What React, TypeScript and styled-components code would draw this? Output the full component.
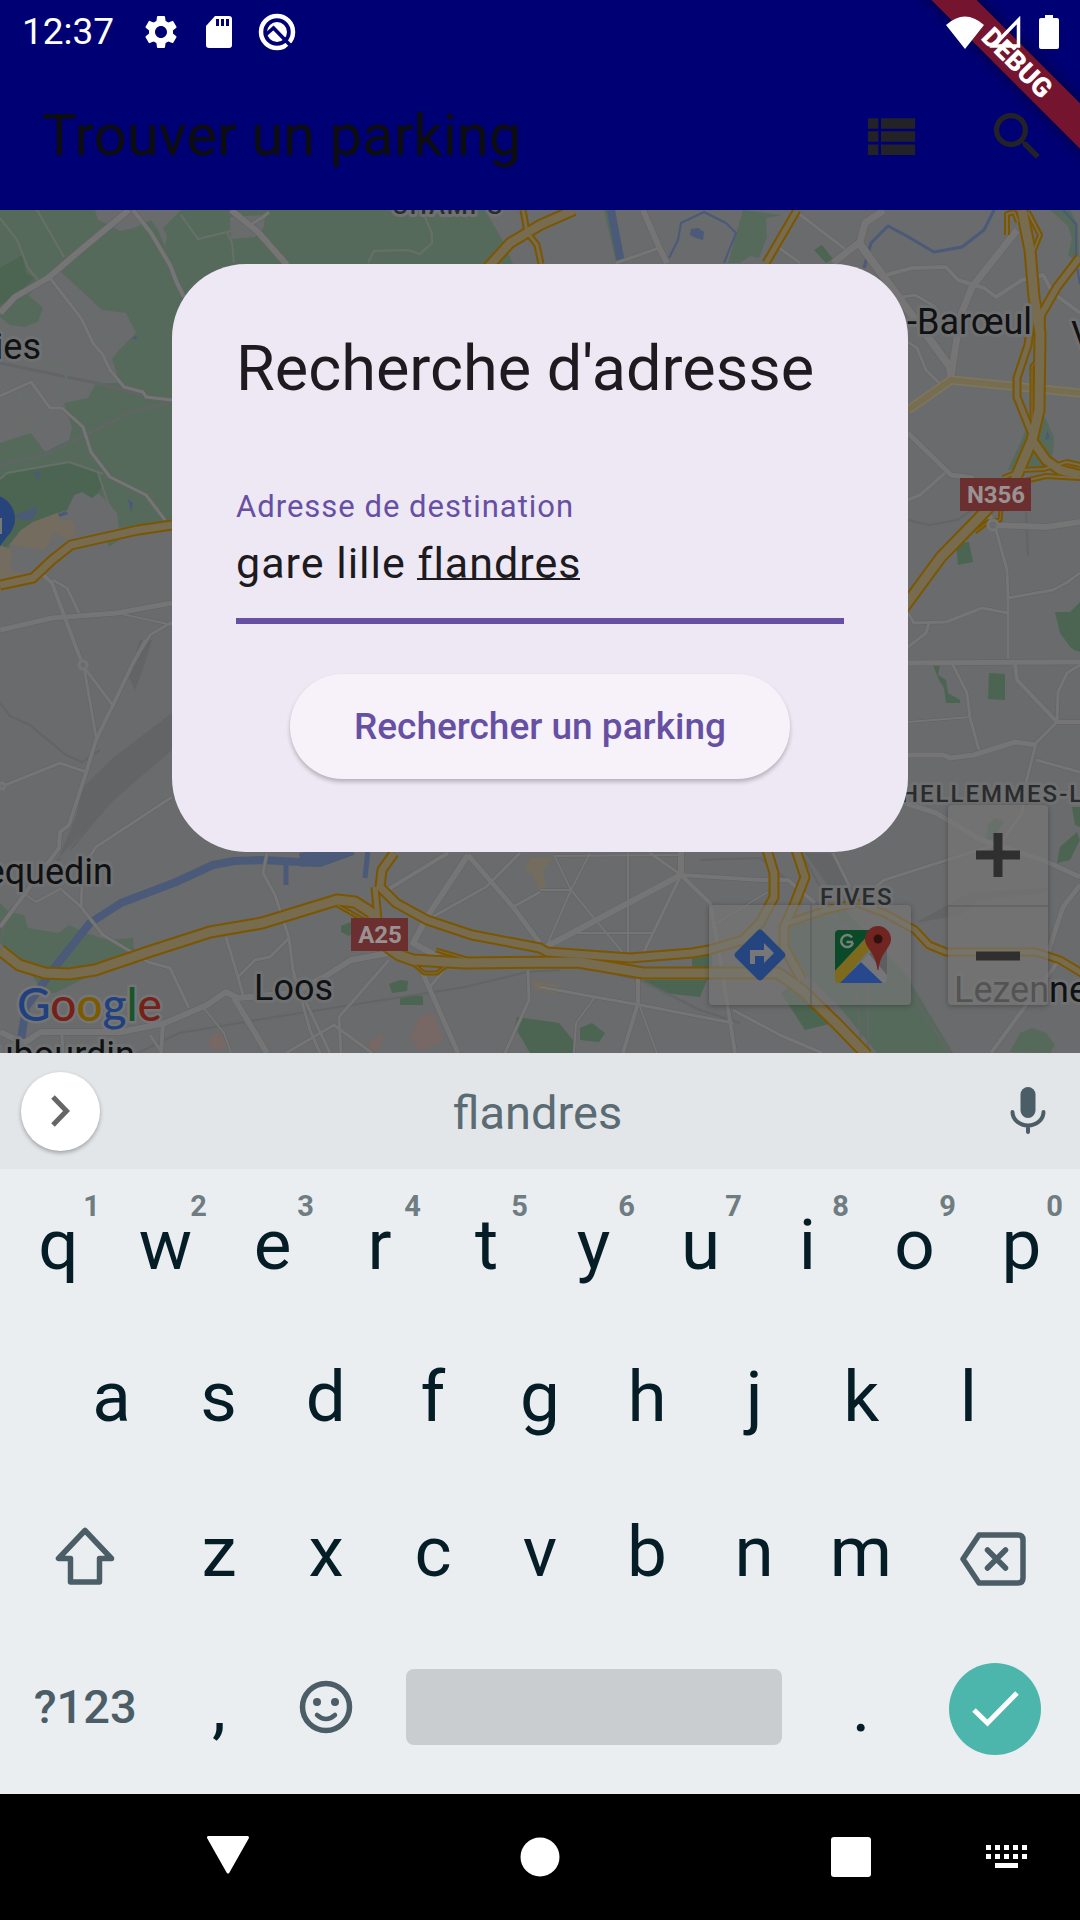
import React, { useLayoutEffect, useState } from 'react';
import styled, { createGlobalStyle, css } from 'styled-components';
import { MdSettings } from 'react-icons/md';

const GlobalStyle = createGlobalStyle`
  * { box-sizing: border-box; }
  html, body { margin: 0; background: #000; }
  body, button, input { font-family: Roboto, "Noto Sans", sans-serif; }
  button { border: 0; padding: 0; margin: 0; background: none; cursor: pointer; }
  svg { display: block; }
`;

const Screen = styled.div`
  position: relative;
  display: flex;
  flex-direction: column;
  min-height: 100vh;
  overflow: hidden;
`;

/* ---------- Status bar and app bar ---------- */

const TopArea = styled.header`
  background: #000075;
`;

const StatusBar = styled.div`
  position: relative;
  z-index: 2;
  display: flex;
  align-items: center;
  height: 63px;
  padding: 0 10px 0 22px;
  color: #fff;
`;

const Clock = styled.time`
  font-size: 37px;
  line-height: 64px;
  margin-right: 26px;
`;

const StatusIcons = styled.div<{ $end?: boolean }>`
  display: flex;
  gap: ${(p) => (p.$end ? 0 : 16)}px;
  ${(p) => p.$end && css`margin-left: auto;`}
`;

const StatusIcon = styled.span`
  display: grid;
  place-items: center;
  width: 42px;
  height: 42px;
`;

const AppBar = styled.div`
  display: flex;
  align-items: center;
  height: 147px;
  padding-left: 42px;
  color: #0d0d0f;
`;

const AppTitle = styled.h1`
  flex: 1;
  margin: 0;
  padding-bottom: 4px;
  font-size: 58px;
  font-weight: 400;
  line-height: 74px;
`;

const AppAction = styled.button`
  display: grid;
  place-items: center;
  width: 126px;
  height: 126px;
  color: #232227;
`;

const BannerCorner = styled.div`
  position: absolute;
  top: 0;
  right: 0;
  z-index: 1;
  width: 180px;
  height: 180px;
  overflow: hidden;
  pointer-events: none;
`;

const Banner = styled.div`
  position: absolute;
  top: 47px;
  left: -13px;
  width: 260px;
  height: 32px;
  background: #75142e;
  box-shadow: 0 0 16px rgba(0, 0, 0, 0.5);
  color: #fff;
  font-size: 27px;
  font-weight: 900;
  line-height: 32px;
  text-align: center;
  transform: rotate(45deg);
`;

/* ---------- Map ---------- */

const MapArea = styled.main`
  position: relative;
  flex: 1;
  display: flex;
  justify-content: center;
  align-items: flex-start;
  padding: 54px 32px 201px;
  background: #6a6b6d;
`;

const MapCanvas = styled.svg`
  position: absolute;
  inset: 0;
  width: 100%;
  height: 100%;
`;

const MapControls = styled.div`
  position: absolute;
  right: 32px;
  bottom: 48px;
  display: flex;
  align-items: flex-end;
  gap: 37px;
`;

const ControlGroup = styled.div<{ $column?: boolean }>`
  display: flex;
  flex-direction: ${(p) => (p.$column ? 'column' : 'row')};
  background: rgba(119, 119, 119, 0.66);
  border-radius: 4px;
  box-shadow: 0 1px 5px rgba(40, 40, 40, 0.45);

  & > button {
    width: ${(p) => (p.$column ? 100 : 101)}px;
    height: 100px;
  }

  & > button + button {
    ${(p) => (p.$column ? 'border-top' : 'border-left')}: 2px solid rgba(95, 95, 95, 0.7);
  }
`;

const ControlButton = styled.button`
  display: grid;
  place-items: center;
`;

/* ---------- Dialog ---------- */

const Dialog = styled.form`
  position: relative;
  z-index: 1;
  display: flex;
  flex-direction: column;
  width: 100%;
  max-width: 736px;
  padding: 63px 64px 73px;
  border-radius: 74px;
  background: #eee8f4;
`;

const DialogTitle = styled.h2`
  margin: 0 0 76px;
  color: #1d1b20;
  font-size: 63px;
  font-weight: 400;
  line-height: 84px;
`;

const FieldLabel = styled.label`
  color: #6750a4;
  font-size: 31px;
  line-height: 40px;
  letter-spacing: 1px;
`;

const Field = styled.div`
  position: relative;
`;

const FieldInput = styled.input`
  display: block;
  width: 100%;
  height: 97px;
  padding: 0 0 20px;
  border: 0;
  border-bottom: 6px solid #6750a4;
  border-radius: 0;
  outline: none;
  background: transparent;
  color: #1d1b20;
  font-size: 43px;
  letter-spacing: 1px;
`;

const ComposingMark = styled.span`
  position: absolute;
  top: 51px;
  height: 2px;
  background: #1d1b20;
`;

const SubmitButton = styled.button`
  align-self: center;
  margin-top: 50px;
  padding: 0 64px;
  height: 105px;
  border-radius: 53px;
  background: #f7f2fa;
  box-shadow: 0 3px 4px rgba(0, 0, 0, 0.24);
  color: #6750a4;
  font-size: 37px;
  font-weight: 500;
`;

/* ---------- Keyboard ---------- */

const SuggestionBar = styled.div`
  display: grid;
  grid-template-columns: 1fr auto 1fr;
  align-items: center;
  height: 116px;
  padding: 0 26px 0 21px;
  background: #e2e6e9;
`;

const ExpandButton = styled.button`
  display: grid;
  place-items: center;
  width: 79px;
  height: 79px;
  border-radius: 50%;
  background: #fff;
  box-shadow: 0 2px 4px rgba(0, 0, 0, 0.3);
`;

const Suggestion = styled.button`
  padding-top: 4px;
  color: #5a6b73;
  font-size: 47px;
  line-height: 60px;
`;

const MicButton = styled.button`
  justify-self: end;
  padding-right: 5px;
`;

const Keyboard = styled.section`
  padding-bottom: 10px;
  background: #ebeef1;
`;

const KeyRow = styled.div<{ $inset?: boolean }>`
  display: flex;
  height: 155px;
  padding: 0 ${(p) => (p.$inset ? 58 : 5)}px;

  &:first-child {
    height: 150px;
  }
`;

const Key = styled.button<{ $units?: number; $small?: boolean }>`
  position: relative;
  display: grid;
  place-items: center;
  flex: ${(p) => p.$units ?? 1} 1 0;
  color: ${(p) => (p.$small ? '#4b5d66' : '#051d27')};
  font-size: ${(p) => (p.$small ? 47 : 71)}px;
  font-weight: ${(p) => (p.$small ? 500 : 400)};
`;

const KeyHint = styled.span`
  position: absolute;
  top: 20px;
  right: 12px;
  color: #6f7c82;
  font-size: 29px;
  font-weight: 700;
  line-height: 34px;
`;

const SpaceBar = styled.span`
  width: calc(100% - 52px);
  height: 76px;
  border-radius: 8px;
  background: #c9cdd0;
`;

const EnterDisc = styled.span`
  display: grid;
  place-items: center;
  width: 92px;
  height: 92px;
  margin-top: 4px;
  border-radius: 50%;
  background: #4db6ac;
`;

/* ---------- System navigation ---------- */

const NavBar = styled.nav`
  display: grid;
  grid-template-columns: 178fr 100px 212fr 100px 211fr 100px 56fr 100px 23fr;
  height: 126px;
  background: #000;

  & > :nth-child(1) { grid-column: 2; }
  & > :nth-child(2) { grid-column: 4; }
  & > :nth-child(3) { grid-column: 6; }
  & > :nth-child(4) { grid-column: 8; }
`;

const NavButton = styled.button`
  display: grid;
  place-items: center;
`;

/* ---------- Map data ---------- */

type Line = [number, string];

const GREEN = '#566a5c';
const DARK_GREEN = '#4c6552';
const URBAN = '#6a6b6d';
const WATER = '#4a5a78';
const TAN = '#746c5e';
const PINK = '#776866';
const RAIL = '#636466';

const areas: [string, string][] = [
  [GREEN, '0,210 489,210 489,217 504,243 513,264 400,300 200,420 172,523 119,528 117,513 108,502 98,493 92,498 82,492 74,495 67,510 57,513 33,522 21,533 7,550 0,553'],
  [URBAN, '95,210 98,220 110,225 120,231 134,228 151,220 158,230 165,246 167,236 163,228 169,222 181,210'],
  [URBAN, '230,217 231,239 255,237 264,227 265,215'],
  [URBAN, '60,271 102,310 126,313 136,333 119,350 112,359 120,383 96,383 88,398 64,403 72,427 69,440 45,452 31,433 0,443 0,317 10,325 24,327 38,322 43,308 28,295 48,278'],
  [DARK_GREEN, '0,268 22,255 26,273 34,278 15,297 0,305'],
  [DARK_GREEN, '0,480 7,473 69,462 98,473 103,483 98,493 92,498 82,492 74,495 67,510 57,513 33,522 21,533 0,553'],
  [TAN, '9,545 21,530 33,522 57,513 61,520 72,520 76,533 69,540 55,533 45,550'],
  [TAN, '0,545 12,550 10,570 26,574 20,580 0,580'],
  [WATER, '34,472 41,472 38,480'],
  [WATER, '14,515 38,507 32,520 20,519'],
  [WATER, '128,499 133,503 131,512'],
  [WATER, '58,514 66,511 68,514 60,517'],
  [WATER, '132,338 137,335 136,340'],
  [GREEN, '106,540 122,538 109,547'],
  [GREEN, '743,210 781,215 766,218 767,237 759,258 750,256 740,263 728,263'],
  [GREEN, '604,210 612,210 624,262 616,262'],
  [DARK_GREEN, '814,250 822,245 833,259 826,263'],
  [WATER, '691,229 698,228 704,232 703,240 696,238 690,235'],
  [GREEN, '1050,210 1070,210 1078,225 1079,262 1068,255 1072,238 1068,226'],
  [GREEN, '1045,417 1054,437 1053,453 1046,467 1008,470 1026,430'],
  [WATER, '1047,430 1050,438 1045,440'],
  [DARK_GREEN, '956,543 969,542 973,562 958,565'],
  [DARK_GREEN, '1055,612 1070,612 1080,602 1080,650 1071,648 1060,633'],
  [DARK_GREEN, '989,673 1005,674 1005,700 988,699'],
  [DARK_GREEN, '933,665 940,665 938,675 946,680 948,693 960,700 960,703 946,703 944,688 939,680'],
  [DARK_GREEN, '986,838 988,824 996,818 1004,822 991,843'],
  [DARK_GREEN, '1072,807 1080,807 1080,827 1075,825'],
  [DARK_GREEN, '1057,863 1060,847 1077,832 1080,840 1070,860'],
  [DARK_GREEN, '1066,640 1080,640 1080,652 1074,650'],
  [RAIL, '172,713 172,750 114,800 69,847 59,857 76,817 83,787 114,757'],
  [RAIL, '152,640 140,640 129,677 135,690 142,672'],
  [GREEN, '0,903 9,912 24,915 28,928 59,933 69,925 86,933 107,940 133,938 134,948 138,963 96,973 55,993 43,993 34,978 0,943'],
  [DARK_GREEN, '389,984 400,980 408,981 407,991 392,993'],
  [DARK_GREEN, '400,998 410,995 423,996 423,1005 400,1005'],
  [DARK_GREEN, '341,926 351,922 356,930 349,936 341,932'],
  [DARK_GREEN, '517,1017 559,1023 573,1040 574,1053 530,1053 515,1027'],
  [DARK_GREEN, '580,1028 592,1023 605,1033 599,1042 580,1040'],
  [DARK_GREEN, '643,980 707,980 700,997 664,993'],
  [DARK_GREEN, '692,958 712,952 712,969 692,970'],
  [GREEN, '790,925 840,905 905,973 953,1053 877,1053 838,1005 790,960'],
  [DARK_GREEN, '781,993 795,983 833,1023 805,1030'],
  [GREEN, '1010,1052 1020,1033 1032,1028 1046,1033 1055,1045 1050,1053'],
  [PINK, '207,1042 217,1032 230,1042 217,1053'],
  [PINK, '410,1037 420,1016 433,1013 444,1040 420,1052'],
  [PINK, '368,1043 384,1033 379,1050 372,1053'],
  [TAN, '525,870 530,858 554,857 543,870 546,889 538,889 533,875'],
  [TAN, '532,980 558,985 558,994 535,990'],
  [RAIL, '805,853 830,853 850,885 862,905 840,903'],
  [RAIL, '915,923 970,893 1050,887 1045,893 980,900 960,915'],
];

const water: Line[] = [
  [8, '611,210 621,263'],
  [2, '669,258 678,240 681,223 704,212 726,223 736,233 724,263'],
  [3, '864,268 871,243 888,226 905,235 934,252 962,247 984,230 994,210'],
  [2, '1063,210 1076,224 1076,262 1080,284'],
  [8, '353,851 320,863 262,860 234,861 213,865 176,882 121,903 90,923 55,967 26,1007 21,1040'],
  [14, '300,860 322,857 350,848'],
  [5, '286,863 286,885'],
  [5, '368,850 365,878'],
];

const rails: Line[] = [
  [3, '0,363 96,383 172,402'],
  [2, '0,465 45,455 90,433 131,412 172,402'],
  [2, '0,703 10,716 30,725 66,755 82,762 100,750'],
  [2, '908,520 929,525 957,520 977,507'],
  [2, '1026,512 1028,556'],
  [2, '138,1053 179,1033 275,1017 465,987 527,972 560,970'],
  [2, '555,960 640,980 700,1010 740,1023'],
  [2, '172,735 120,790 70,850'],
  [2, '0,940 10,910 60,858'],
  [2, '905,985 950,1053'],
  [2, '868,985 868,1053'],
  [2, '856,990 862,1053'],
  [2, '700,860 760,858 800,890 850,930'],
  [2, '800,850 830,905 850,940'],
];

const roads: Line[] = [
  [7, '0,313 15,297 48,278 83,248 129,210'],
  [5, '133,210 151,233 170,265 177,283 184,297'],
  [7, '231,210 258,232 287,265'],
  [4, '269,212 263,217 250,225'],
  [4, '50,278 81,318 93,343 103,355 110,370 124,387 143,392 146,397 172,400'],
  [4, '0,396 31,382 50,408 62,408 83,427 91,452 110,477 146,495 165,520'],
  [6, '0,630 52,618 117,613 172,603'],
  [5, '41,573 52,583 62,610 77,650 83,665'],
  [3, '117,613 172,625'],
  [4, '53,580 67,588 79,613'],
  [4, '141,650 150,635 172,622'],
  [7, '643,210 659,247 667,263'],
  [4, '659,248 616,263'],
  [4, '798,213 845,249'],
  [4, '778,247 800,263'],
  [8, '884,210 865,223 860,242 833,263'],
  [9, '859,243 950,367 951,377'],
  [5, '886,275 912,268 946,267 958,280 984,288 996,297 1022,280 1043,275 1053,293 1080,313'],
  [8, '1017,230 972,287 960,317 951,377'],
  [6, '908,433 951,475 974,478'],
  [4, '945,473 920,495 908,500'],
  [4, '908,342 917,348 926,370 939,383'],
  [4, '902,297 915,295 936,307'],
  [7, '988,513 993,525 1046,527 1080,522'],
  [4, '996,530 1007,570 1008,598 1008,658'],
  [4, '1008,598 1053,590 1066,583 1080,573'],
  [4, '1008,613 982,608 946,622 914,623 908,613'],
  [4, '929,623 926,633 908,647'],
  [4, '84,667 96,737'],
  [4, '84,667 114,707'],
  [5, '146,640 133,663 114,703 96,740 86,773 69,825 60,832 59,848 0,927'],
  [4, '0,787 60,763 86,772'],
  [4, '172,797 96,847 83,867 81,907'],
  [3, '26,895 36,902 62,888'],
  [4, '62,890 81,907 103,935 148,962 170,968 189,1008'],
  [4, '267,853 263,873 275,895 289,938 293,970 310,1030 320,1053'],
  [4, '226,937 238,977 243,995'],
  [4, '238,977 255,960 270,957 289,938'],
  [7, '389,953 351,960 324,977 293,993 238,998 226,992 207,1005 165,1023 121,1032 41,1032 24,1043 0,1032'],
  [7, '234,998 267,1053'],
  [3, '203,1007 224,1033 231,1053'],
  [5, '163,1023 161,1053'],
  [4, '62,1035 63,1053'],
  [4, '150,1035 160,1050'],
  [5, '448,853 382,893'],
  [7, '468,855 427,917 413,943 444,960'],
  [6, '468,855 513,907 540,943'],
  [4, '520,853 503,870 486,887 427,920'],
  [4, '513,907 540,892'],
  [6, '420,967 458,1053'],
  [4, '444,970 430,987'],
  [4, '389,960 339,1017 341,1053'],
  [4, '286,1053 334,1025 372,1053'],
  [4, '293,975 330,1053'],
  [4, '528,970 529,1000 505,1053'],
  [6, '908,663 1080,662'],
  [4, '952,663 967,693 970,718 979,750'],
  [3, '908,722 970,717'],
  [5, '1015,663 1017,680 1057,722 1080,722'],
  [4, '1080,665 1067,673 1058,692 1057,722 1036,743 1026,783 1022,813 1001,843 884,880 864,897'],
  [6, '908,755 943,755 950,758 974,755 1015,742 1036,745'],
  [4, '1036,760 1080,772'],
  [6, '905,803 936,813 981,840 1043,860 1080,877'],
  [6, '1080,885 1063,907 1048,953'],
  [5, '1057,963 991,1053'],
  [4, '833,853 850,887'],
  [7, '540,950 681,875 681,850'],
  [5, '681,875 760,880 788,880 815,903'],
  [5, '681,875 710,903 722,970 735,1053'],
  [3, '712,926 768,892'],
  [3, '628,853 628,960'],
  [3, '574,933 654,933'],
  [3, '554,856 681,855'],
  [3, '555,857 571,890 623,953'],
  [3, '590,853 571,890 545,950'],
  [3, '540,890 571,890'],
  [4, '650,853 681,875 640,960'],
  [5, '638,973 638,1003 623,1053'],
  [4, '540,987 595,997 640,1005 733,1023'],
  [3, '640,1007 657,1053'],
  [3, '595,997 576,1023 574,1053'],
  [4, '733,1010 780,1035 822,1053'],
];

const lanes = [
  '181,215 198,239 227,232 232,243 234,263',
  '227,232 250,225',
  '368,263 374,251 408,250 420,254 432,243 432,234 425,217',
  '0,218 17,240 28,268 38,280',
  '37,210 64,257',
  '0,479 7,473 69,462 103,474',
  '98,473 108,503',
  '71,300 86,306 110,337 98,343 81,322 66,332 54,327 55,318 70,310 78,318',
  '0,373 10,375 12,385 0,393',
  '18,388 30,430 37,430 52,410',
  '0,418 31,430',
  '55,360 66,376 62,400',
  '8,330 30,355 60,365 84,360',
];

const arterials: Line[] = [[9, '908,410 951,380 1080,393']];

const motorways: Line[] = [
  [11, '0,585 33,578 52,560 71,545 138,530 172,525'],
  [12, '480,276 510,243 540,225 574,210'],
  [7, '523,210 527,232 537,245 541,264'],
  [9, '797,210 766,263'],
  [6, '1007,235 1007,214 1014,212 1018,222'],
  [6, '1028,212 1040,235 1034,250'],
  [9, '1034,303 1028,345 1017,378 1017,397 1031,432'],
  [5, '1036,362 1032,366 1032,420'],
  [10, '1080,257 1057,287 1041,315 1040,350'],
  [6, '1003,478 1022,470 1044,469 1067,462 1080,465'],
  [6, '1012,484 1046,476 1080,478'],
  [12, '1032,440 1046,460 1060,470 1080,475'],
  [13, '1022,210 1030,250 1034,297 1040,333 1039,410 1032,440 1015,480 977,520 941,557 902,610'],
  [5, '975,532 988,522 1000,520 1001,510'],
  [5, '406,957 424,973 437,973 451,962'],
  [5, '436,950 460,957 480,963'],
  [5, '337,905 360,918 376,924'],
  [9, '375,887 378,920'],
  [11, '394,853 382,870 380,887 396,903 427,920 472,935 540,948 547,952 630,958 692,953 709,950 743,940 760,923 774,897 774,873 767,850'],
  [13, '0,950 19,965 45,973 69,974 95,970 148,952 210,932 262,923 337,900 355,902 372,913 382,943 399,955 413,960 465,963 578,962 643,973 778,973 802,990 836,1023 867,1055'],
  [11, '796,850 805,877 795,903 784,927 784,947 802,980'],
  [9, '788,923 826,910 857,903 884,913 915,930 929,945 946,952 1036,952 1060,960 1085,975'],
];

const Strokes = ({ lines, color, trim = 0 }: { lines: Line[]; color: string; trim?: number }) => (
  <g fill="none" stroke={color} strokeLinejoin="round" strokeLinecap="butt">
    {lines.map(([width, points], i) => (
      <polyline key={i} points={points} strokeWidth={width - trim} />
    ))}
  </g>
);

const TownLabel = styled.text`
  fill: #101112;
  font-family: Roboto, sans-serif;
  font-size: 36px;
  stroke: #707172;
  stroke-width: 6px;
  stroke-linejoin: round;
  paint-order: stroke;
`;

const DistrictLabel = styled(TownLabel)`
  fill: #292b2d;
  font-size: 24px;
  font-weight: 500;
  letter-spacing: 2px;
`;

const ShieldText = styled.text`
  fill: #9a9292;
  font-family: Roboto, sans-serif;
  font-size: 24px;
  font-weight: 700;
  text-anchor: middle;
`;

const Wordmark = styled.text`
  font-family: Lato, sans-serif;
  font-size: 46px;
  font-weight: 500;
  stroke: #747576;
  stroke-width: 5px;
  stroke-linejoin: round;
  paint-order: stroke;
`;

const wordmarkLetters: [string, string][] = [
  ['G', '#1f4180'], ['o', '#762018'], ['o', '#7c5a00'], ['g', '#1f4180'], ['l', '#17552a'], ['e', '#762018'],
];

const CityMap = () => (
  <MapCanvas viewBox="0 210 1080 843" preserveAspectRatio="xMidYMid slice" role="img" aria-label="Carte de Lille">
    {areas.map(([fill, points], i) => (
      <polygon key={i} fill={fill} points={points} />
    ))}
    <Strokes lines={water} color={WATER} />
    <Strokes lines={rails} color={RAIL} />
    <g fill="none" stroke="#667069" strokeWidth={2}>
      {lanes.map((points, i) => (
        <polyline key={i} points={points} />
      ))}
    </g>
    <Strokes lines={roads} color="#626364" />
    <Strokes lines={roads} color="#757576" trim={1} />
    <Strokes lines={arterials} color="#7e775f" />
    <Strokes lines={arterials} color="#776e52" trim={3} />
    <Strokes lines={motorways} color="#7b5600" />
    <Strokes lines={motorways} color="#776c4f" trim={4} />
    <g fill="#6a6b6d" stroke="#757576" strokeWidth={3}>
      <circle cx={83} cy={665} r={4} />
      <circle cx={993} cy={525} r={5} />
      <circle cx={2} cy={786} r={3} />
    </g>

    <path d="M-8 495C5 495 15 506 15 519 15 532 4 538 0 547L-12 547V495Z" fill="#27447c" />
    <path d="M0 518h2v16H0z" fill="#777" />

    <g fill="#6b2f30">
      <rect x={960} y={478} width={71} height={33} />
      <rect x={351} y={918} width={57} height={33} />
    </g>
    <ShieldText x={996} y={503}>N356</ShieldText>
    <ShieldText x={380} y={943}>A25</ShieldText>

    <DistrictLabel x={392} y={214}>CHAMPS</DistrictLabel>
    <DistrictLabel x={901} y={802}>HELLEMMES-LILLE</DistrictLabel>
    <DistrictLabel x={820} y={905}>FIVES</DistrictLabel>
    <TownLabel x={41} y={359} textAnchor="end">ies</TownLabel>
    <TownLabel x={907} y={334}>-Barœul</TownLabel>
    <TownLabel x={1071} y={347}>V</TownLabel>
    <TownLabel x={113} y={884} textAnchor="end">equedin</TownLabel>
    <TownLabel x={254} y={1000}>Loos</TownLabel>
    <TownLabel x={135} y={1067} textAnchor="end">ubourdin</TownLabel>
    <TownLabel x={954} y={1002}>Lezennes</TownLabel>
    <Wordmark x={17} y={1021}>
      {wordmarkLetters.map(([letter, color], i) => (
        <tspan key={i} fill={color}>{letter}</tspan>
      ))}
    </Wordmark>
  </MapCanvas>
);

const DirectionsIcon = () => (
  <svg width="54" height="54" viewBox="0 0 54 54">
    <rect x="8" y="8" width="38" height="38" rx="4" fill="#24457f" transform="rotate(45 27 27)" />
    <path d="M17 36V22h14v-7l10 10-10 10v-7h-9v8z" fill="#77777a" />
  </svg>
);

const MapsIcon = () => (
  <svg width="58" height="60" viewBox="0 0 58 60">
    <path d="M2 9q0-4 4-4h34L2 46z" fill="#0b4a28" />
    <path d="M2 46 36 10l6 8L8 58H6q-4 0-4-4z" fill="#7d6a1c" />
    <path d="M28 37 50 58H7z" fill="#27488c" />
    <path d="M28 37 36 29 54 50v4q0 4-4 4z" fill="#76767a" />
    <path d="M36 29 54 16v34z" fill="#5e5e60" />
    <path d="M20 17h-6.500M19 12.500a6 6 0 1 0 1 5" fill="none" stroke="#77807a" strokeWidth="2.500" />
    <path d="M45 1c7 0 13 6 13 13 0 9-11 14-12.500 31h-1C43 28 32 23 32 14 32 7 38 1 45 1z" fill="#712520" />
    <circle cx="45" cy="14" r="4.500" fill="#32100e" />
  </svg>
);

const ZoomGlyph = ({ plus }: { plus?: boolean }) => (
  <svg width="44" height="44" viewBox="0 0 44 44" fill="#2f2f2f">
    <path d="M0 17.500h44v9H0z" />
    {plus && <path d="M17.500 0h9v44h-9z" />}
  </svg>
);

/* ---------- Dialog field ---------- */

const FIELD_FONT = '43px Roboto, "Noto Sans", sans-serif';
const FIELD_TRACKING = 1;

const measure = (text: string) => {
  const context = document.createElement('canvas').getContext('2d');
  if (!context) return 0;
  context.font = FIELD_FONT;
  return context.measureText(text).width + text.length * FIELD_TRACKING;
};

const AddressField = () => {
  const [value, setValue] = useState('gare lille flandres');
  const [mark, setMark] = useState({ left: 0, width: 0 });

  useLayoutEffect(() => {
    const start = value.lastIndexOf(' ') + 1;
    setMark({ left: measure(value.slice(0, start)), width: measure(value.slice(start)) });
  }, [value]);

  return (
    <>
      <FieldLabel htmlFor="address">Adresse de destination</FieldLabel>
      <Field>
        <FieldInput id="address" type="text" value={value} onChange={(e) => setValue(e.target.value)} />
        <ComposingMark style={mark} />
      </Field>
    </>
  );
};

/* ---------- Keyboard glyphs ---------- */

const ShiftIcon = () => (
  <svg width="60" height="68" viewBox="0 -8 60 68" fill="none" stroke="#4b5d66" strokeWidth="5.500" strokeLinejoin="round">
    <path d="M30 4.500 3.500 32.500H15.500V56H44.500V32.500H56.500Z" />
  </svg>
);

const DeleteIcon = () => (
  <svg width="72" height="68" viewBox="0 -14 72 68" fill="none" stroke="#4b5d66" strokeWidth="5.500" strokeLinejoin="round" strokeLinecap="round">
    <path d="M20 3H59q5 0 5 5V46q0 5-5 5H20L4 27Z" />
    <path d="M28.500 18 46.500 36M46.500 18 28.500 36" />
  </svg>
);

const SmileyIcon = () => (
  <svg width="54" height="54" viewBox="0 0 54 54" fill="none" stroke="#4b5d66">
    <circle cx="27" cy="27" r="23.500" strokeWidth="5.500" />
    <circle cx="18" cy="22" r="4" fill="#4b5d66" stroke="none" />
    <circle cx="36" cy="22" r="4" fill="#4b5d66" stroke="none" />
    <path d="M18 35q9 8 18 0" strokeWidth="4.500" strokeLinecap="round" />
  </svg>
);

const digitRow = ['q', 'w', 'e', 'r', 't', 'y', 'u', 'i', 'o', 'p'];
const homeRow = ['a', 's', 'd', 'f', 'g', 'h', 'j', 'k', 'l'];
const bottomRow = ['z', 'x', 'c', 'v', 'b', 'n', 'm'];

export default function App() {
  return (
    <>
      <GlobalStyle />
      <Screen>
        <TopArea>
          <StatusBar>
            <Clock>12:37</Clock>
            <StatusIcons>
              <StatusIcon><MdSettings size={40} /></StatusIcon>
              <StatusIcon>
                <svg width="28" height="34" viewBox="0 0 28 34">
                  <path d="M10 1h14q3 0 3 3v26q0 3-3 3H4q-3 0-3-3V11z" fill="#fff" />
                  <path d="M11 4h3v7h-3zM16 4h3v7h-3zM21 4h3v7h-3z" fill="#000075" />
                </svg>
              </StatusIcon>
              <StatusIcon>
                <svg width="38" height="38" viewBox="0 0 38 38" fill="none">
                  <circle cx="19" cy="19" r="16" stroke="#fff" strokeWidth="4.500" />
                  <circle cx="19" cy="19" r="10" fill="#fff" />
                  <path d="M7.500 22 15.500 15 32 32" stroke="#000075" strokeWidth="3.500" />
                  <path d="m29 36 5-5" stroke="#000075" strokeWidth="3" />
                </svg>
              </StatusIcon>
            </StatusIcons>
            <StatusIcons $end>
              <StatusIcon>
                <svg width="40" height="36" viewBox="0 0 40 36" fill="#fff"><path d="M1 11Q20-6 39 11L20 35z" /></svg>
              </StatusIcon>
              <StatusIcon>
                <svg width="38" height="36" viewBox="0 0 38 36" fill="none" stroke="#fff" strokeWidth="3.500">
                  <path d="M30.500 6V32H5.500Z" />
                </svg>
              </StatusIcon>
              <StatusIcon>
                <svg width="20" height="36" viewBox="0 0 20 36" fill="#fff"><path d="M6 1h8v3h4q2 0 2 2v27q0 2-2 2H2q-2 0-2-2V6q0-2 2-2h4z" /></svg>
              </StatusIcon>
            </StatusIcons>
          </StatusBar>
          <AppBar>
            <AppTitle>Trouver un parking</AppTitle>
            <AppAction aria-label="Liste">
              <svg width="63" height="63" viewBox="0 0 24 24" fill="currentColor">
                <path d="M3 14h4v-4H3v4zm0 5h4v-4H3v4zM3 9h4V5H3v4zm5 5h13v-4H8v4zm0 5h13v-4H8v4zM8 5v4h13V5H8z" />
              </svg>
            </AppAction>
            <AppAction aria-label="Rechercher">
              <svg width="63" height="63" viewBox="0 0 24 24" fill="currentColor">
                <path d="M15.500 14h-.79l-.28-.27A6.471 6.471 0 0 0 16 9.500 6.500 6.500 0 1 0 9.500 16c1.610 0 3.090-.59 4.230-1.570l.27.28v.79l5 4.990L20.490 19l-4.990-5zm-6 0C7.010 14 5 11.990 5 9.500S7.010 5 9.500 5 14 7.010 14 9.500 11.990 14 9.500 14z" />
              </svg>
            </AppAction>
          </AppBar>
        </TopArea>
        <BannerCorner><Banner>DEBUG</Banner></BannerCorner>

        <MapArea>
          <CityMap />
          <MapControls>
            <ControlGroup>
              <ControlButton aria-label="Itinéraire"><DirectionsIcon /></ControlButton>
              <ControlButton aria-label="Ouvrir dans Maps"><MapsIcon /></ControlButton>
            </ControlGroup>
            <ControlGroup $column>
              <ControlButton aria-label="Zoom avant"><ZoomGlyph plus /></ControlButton>
              <ControlButton aria-label="Zoom arrière"><ZoomGlyph /></ControlButton>
            </ControlGroup>
          </MapControls>
          <Dialog role="dialog" aria-labelledby="dialog-title" onSubmit={(e) => e.preventDefault()}>
            <DialogTitle id="dialog-title">Recherche d'adresse</DialogTitle>
            <AddressField />
            <SubmitButton type="submit">Rechercher un parking</SubmitButton>
          </Dialog>
        </MapArea>

        <SuggestionBar>
          <ExpandButton aria-label="Plus d'options">
            <svg width="32" height="36" viewBox="0 0 32 36" fill="none" stroke="#666" strokeWidth="5">
              <path d="m8 4 13.500 14L8 32" />
            </svg>
          </ExpandButton>
          <Suggestion>flandres</Suggestion>
          <MicButton aria-label="Saisie vocale">
            <svg width="42" height="48" viewBox="0 0 42 48" fill="none" stroke="#4b5d66" strokeLinecap="round">
              <rect x="13.500" y="0" width="15" height="31" rx="7.500" fill="#4b5d66" stroke="none" />
              <path d="M5.500 25a15.500 13.500 0 0 0 31 0M21 39v6" strokeWidth="4" />
            </svg>
          </MicButton>
        </SuggestionBar>

        <Keyboard aria-label="Clavier">
          <KeyRow>
            {digitRow.map((letter, i) => (
              <Key key={letter}>
                {letter}
                <KeyHint>{(i + 1) % 10}</KeyHint>
              </Key>
            ))}
          </KeyRow>
          <KeyRow $inset>
            {homeRow.map((letter) => <Key key={letter}>{letter}</Key>)}
          </KeyRow>
          <KeyRow>
            <Key $units={1.5} aria-label="Majuscule"><ShiftIcon /></Key>
            {bottomRow.map((letter) => <Key key={letter}>{letter}</Key>)}
            <Key $units={1.5} aria-label="Effacer"><DeleteIcon /></Key>
          </KeyRow>
          <KeyRow>
            <Key $units={1.5} $small>?123</Key>
            <Key>,</Key>
            <Key aria-label="Emoji"><SmileyIcon /></Key>
            <Key $units={4} aria-label="Espace"><SpaceBar /></Key>
            <Key>.</Key>
            <Key $units={1.5} aria-label="Valider">
              <EnterDisc>
                <svg width="50" height="40" viewBox="0 0 50 40" fill="none" stroke="#fff" strokeWidth="5">
                  <path d="M4 21 17.500 34 47 4" />
                </svg>
              </EnterDisc>
            </Key>
          </KeyRow>
        </Keyboard>

        <NavBar>
          <NavButton aria-label="Retour">
            <svg width="42" height="44" viewBox="0 0 42 44" fill="#fff" stroke="#fff" strokeWidth="3" strokeLinejoin="round">
              <path d="M1.500 2.500h39L21 37z" />
            </svg>
          </NavButton>
          <NavButton aria-label="Accueil">
            <svg width="40" height="40" viewBox="0 0 40 40" fill="#fff"><circle cx="20" cy="20" r="19.500" /></svg>
          </NavButton>
          <NavButton aria-label="Applications récentes">
            <svg width="40" height="40" viewBox="0 0 40 40" fill="#fff"><rect width="40" height="40" rx="3" /></svg>
          </NavButton>
          <NavButton aria-label="Changer de clavier">
            <svg width="42" height="24" viewBox="0 0 42 24" fill="#fff">
              {[0, 9, 18, 27, 36].map((x) => (
                <React.Fragment key={x}>
                  <rect x={x} y={0} width={5} height={5} />
                  <rect x={x} y={9} width={5} height={5} />
                </React.Fragment>
              ))}
              <rect x={9} y={18} width={23} height={5} />
            </svg>
          </NavButton>
        </NavBar>
      </Screen>
    </>
  );
}
